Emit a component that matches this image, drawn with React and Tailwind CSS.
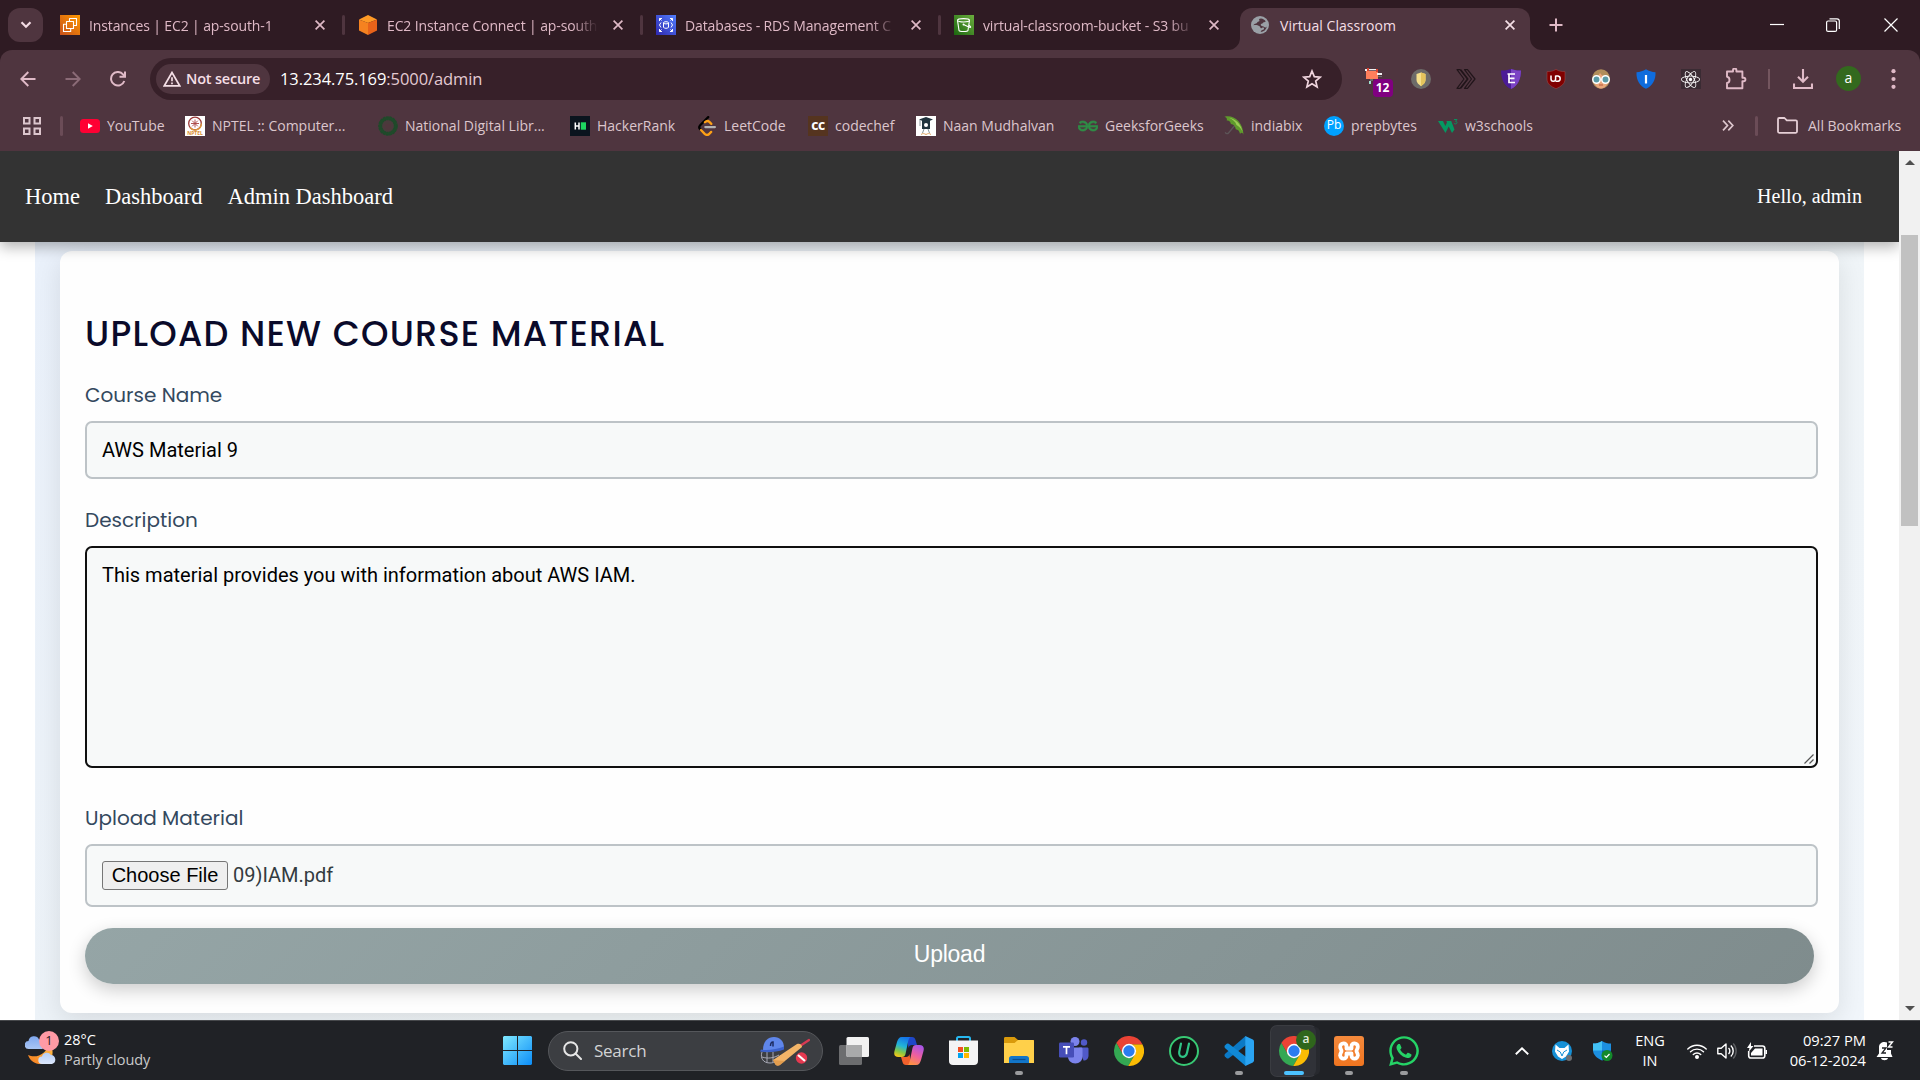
import React from "react";
import { FaReact, FaWhatsapp } from "react-icons/fa";
import { SiGeeksforgeeks } from "react-icons/si";

const Close = ({ className = "" }) => (
  <svg viewBox="0 0 10 10" className={"h-[10px] w-[10px] shrink-0 " + className} fill="none" stroke="currentColor" strokeWidth="1.7">
    <path d="M.6.6 9.4 9.4M9.4.6.6 9.4" />
  </svg>
);

const Ec2Icon = () => (
  <svg viewBox="0 0 20 20" className="h-5 w-5">
    <defs>
      <linearGradient id="ec2" x1="0" y1="1" x2="1" y2="0">
        <stop stopColor="#c8511b" />
        <stop offset="1" stopColor="#ff9900" />
      </linearGradient>
    </defs>
    <path fill="url(#ec2)" d="M0 0h20v20H0z" />
    <g fill="none" stroke="#fff" strokeWidth="1.1" strokeLinejoin="round">
      <path d="M6.5 6.5h7v7h-7zM9.5 6.3V3.5h7v7h-2.8M6.3 9.3H3.5v7.2h7.2v-2.8" />
    </g>
  </svg>
);

const CubeIcon = () => (
  <svg viewBox="0 0 20 20" className="h-5 w-5">
    <path fill="#ff9a26" d="M10 0 19 4.5 10 8 1 4.5z" />
    <path fill="#f58220" d="M1 4.5 10 8v12L1 15.5z" />
    <path fill="#e8631a" d="M19 4.5 10 8v12l9-4.5z" />
  </svg>
);

const RdsIcon = () => (
  <svg viewBox="0 0 20 20" className="h-5 w-5">
    <defs>
      <linearGradient id="rds" x1="0" y1="1" x2="1" y2="0">
        <stop stopColor="#2e27ad" />
        <stop offset="1" stopColor="#527fff" />
      </linearGradient>
    </defs>
    <path fill="url(#rds)" d="M0 0h20v20H0z" />
    <g fill="none" stroke="#fff" strokeWidth="1">
      <path d="M3.5 6V3.5H6M3.5 3.5 5.5 5.5M14 3.5h2.5V6M16.5 3.5l-2 2M3.5 14v2.5H6M3.5 16.5l2-2M16.5 14v2.500H14M16.5 16.5l-2-2" />
      <path d="M5 7.500 3.500 10 5 12.500M15 7.500l1.500 2.500-1.500 2.500" />
      <ellipse cx="10" cy="7.800" rx="2.500" ry="1.100" />
      <path d="M7.500 7.800v4.400c0 1.500 5 1.500 5 0V7.800" />
    </g>
  </svg>
);

const S3Icon = () => (
  <svg viewBox="0 0 20 20" className="h-5 w-5">
    <defs>
      <linearGradient id="s3" x1="0" y1="1" x2="1" y2="0">
        <stop stopColor="#1b660f" />
        <stop offset="1" stopColor="#6cae3e" />
      </linearGradient>
    </defs>
    <path fill="url(#s3)" d="M0 0h20v20H0z" />
    <g fill="none" stroke="#fff" strokeWidth="1.1">
      <ellipse cx="9.500" cy="5.300" rx="6" ry="1.700" />
      <path d="m3.500 5.300 1.500 10c.3 1.600 8.700 1.600 9 0l1.500-10M9.500 9.500l5.300 2.600c1.700.8 2.300.2 1.500-.7L14.800 10" />
    </g>
    <circle cx="9.500" cy="9.500" r="1" fill="#fff" />
  </svg>
);

const GlobeIcon = () => (
  <svg viewBox="0 0 18 18" className="h-[18px] w-[18px]">
    <circle cx="9" cy="9" r="9" fill="#9aa0a6" />
    <path fill="#4f353f" d="M10 2.500c-2 0-2.200 1-1.700 1.800.5 1-.3 1.400-1.300 1.500-.8.100-.6 1.500-1.800 1.600-1.600.1-2.600 1-2.700 1.800 2.500-.4 4.600.2 6 1 1 .6.500 1.700 1.500 2 1.100.3 1.300-.7 2-.6.700 0 1.200.5 1 1.400-.200.900-1.500 1-2.300 1.300-.6.300-.8.800-1 1.700 3-.1 5.600-2.300 6-5.500-.6 1-2 1.200-2.500.4-.6-.9-2.300-.3-3.200-1.500-.8-1.200.4-2 1.300-2 .7 0 .7-1.100 1.500-1.100.9 0 .8-.8 2-.8C13.700 3.800 12 2.600 10 2.500Z" />
  </svg>
);

const tabs = [
  { title: "Instances | EC2 | ap-south-1", Icon: Ec2Icon },
  { title: "EC2 Instance Connect | ap-south", Icon: CubeIcon },
  { title: "Databases - RDS Management C", Icon: RdsIcon },
  { title: "virtual-classroom-bucket - S3 bu", Icon: S3Icon },
];

function TabStrip() {
  return (
    <div className="flex h-[50px] bg-[#2f1b23] text-[#dfb9c6]">
      <div className="flex w-[47px] shrink-0 items-center pl-2">
        <div className="flex h-[34px] w-[35px] items-center justify-center rounded-xl bg-[#4f353f]">
          <svg viewBox="0 0 12 8" className="h-2 w-3" fill="none" stroke="#f3dbe3" strokeWidth="2.200">
            <path d="m1.500 1.200 4.500 4.500 4.500-4.500" />
          </svg>
        </div>
      </div>
      {tabs.map(({ title, Icon }, i) => (
        <div key={title} className="flex w-[298px] shrink-0 items-center pl-[13px]">
          <Icon />
          <div className="ml-[9px] w-[211px] overflow-hidden whitespace-nowrap text-[14px] tracking-[-0.120px] [mask-image:linear-gradient(90deg,#000_88%,transparent)]">
            {title}
          </div>
          <Close className="ml-[15px]" />
          {i < 3 && <div className="ml-auto h-5 w-[3px] rounded bg-[#4f353f]" />}
        </div>
      ))}
      <div className="relative mt-[8px] ml-[1px] flex h-[42px] w-[290px] shrink-0 items-center rounded-t-xl bg-[#4f353f] pb-2 pl-[11px]">
        <svg viewBox="0 0 12 12" className="absolute bottom-0 -left-3 h-3 w-3">
          <path fill="#4f353f" d="M12 0v12H0A12 12 0 0 0 12 0Z" />
        </svg>
        <svg viewBox="0 0 12 12" className="absolute -right-3 bottom-0 h-3 w-3">
          <path fill="#4f353f" d="M0 0v12h12A12 12 0 0 1 0 0Z" />
        </svg>
        <GlobeIcon />
        <div className="ml-[11px] w-[225px] text-[14px] tracking-[0.050px] text-[#f5dfe6]">Virtual Classroom</div>
        <Close className="text-[#f5dfe6]" />
      </div>
      <div className="flex flex-1 items-center">
        <svg viewBox="0 0 14 14" className="ml-[19px] h-[14px] w-[14px]" stroke="currentColor" strokeWidth="2">
          <path d="M7 .5v13M.5 7h13" />
        </svg>
        <svg viewBox="0 0 14 14" className="ml-[207px] h-[14px] w-[14px]" stroke="#fff" strokeWidth="1.200">
          <path d="M0 6.500h14" />
        </svg>
        <svg viewBox="0 0 14 14" className="ml-[42px] h-[14px] w-[14px]" fill="none" stroke="#fff" strokeWidth="1.200">
          <rect x=".6" y="3" width="10" height="10.400" rx="1.500" />
          <path d="M3.500.8h7.500c1.500 0 2.300.8 2.300 2.300v7.900" />
        </svg>
        <svg viewBox="0 0 14 14" className="ml-[44px] h-[14px] w-[14px]" stroke="#fff" strokeWidth="1.200">
          <path d="m.5.5 13 13M13.500.5l-13 13" />
        </svg>
      </div>
    </div>
  );
}

const Slot = ({ children }) => <div className="flex w-[45px] shrink-0 items-center justify-center">{children}</div>;

function Toolbar() {
  return (
    <div className="flex h-[58px] items-center text-[#e0bac7]">
      <svg viewBox="0 0 16 16" className="ml-[20px] h-4 w-4" fill="none" stroke="currentColor" strokeWidth="1.900">
        <path d="M15.500 8H1.500M8.300 1 1.300 8l7 7" />
      </svg>
      <svg viewBox="0 0 16 16" className="ml-[29px] h-4 w-4" fill="none" stroke="#8b6b77" strokeWidth="1.900">
        <path d="M.5 8h14M7.700 1l7 7-7 7" />
      </svg>
      <svg viewBox="0 0 16 16" className="ml-[29px] h-4 w-4" fill="none" stroke="currentColor" strokeWidth="2">
        <path d="M14.300 10A6.800 6.800 0 1 1 13 3.300L15 5.500M15 .5v5.300H9.500" />
      </svg>
      <div className="ml-[24px] flex h-[42px] w-[1192px] items-center rounded-full bg-[#372029] pr-[20px] pl-[6px]">
        <div className="flex h-[30px] w-[114px] items-center rounded-full bg-[#4f353f] pl-[7px] text-[#f5dfe6]">
          <svg viewBox="0 0 18 16" className="h-4 w-[18px]" fill="none" stroke="currentColor" strokeWidth="1.700">
            <path d="M9 1.500 1.300 14.800h15.400zM9 6.300v4M9 11.600v1.700" />
          </svg>
          <span className="ml-[5px] text-[14.500px] font-semibold tracking-[-0.200px]">Not secure</span>
        </div>
        <div className="ml-[10px] text-[16.500px] tracking-[-0.080px] text-[#e3cad2]">
          <span className="text-white">13.234.75.169</span>:5000/admin
        </div>
        <svg viewBox="0 0 20 20" className="ml-auto h-5 w-5" fill="none" stroke="#f0d5de" strokeWidth="1.700">
          <path d="m10 2 2.300 5.600 6 .5-4.600 3.900 1.400 5.900L10 14.700l-5.100 3.200L6.300 12 1.700 8.100l6-.5z" />
        </svg>
      </div>
      <div className="ml-[11px] flex items-center">
        <Slot>
          <div className="relative h-[34px] w-[20px]">
            <svg viewBox="0 0 20 22" className="absolute top-[6px] left-[-1px] h-[22px] w-[20px]">
              <path fill="#ff7f5c" d="M1 3h12v8H1z" />
              <path fill="#f2f2f2" d="M0 1h2v2H0zM3 1h9v1.200H3zM12 5h5v2h-5z" />
              <path fill="#d8412f" d="M2 0h2v3H2zM11 1h2v3h-2z" />
              <path fill="#6b6b6b" d="M5 11h3v2H5zM13 8h4v1h-4z" />
              <path fill="#9fe0cf" d="M4 13h2v3H4z" />
            </svg>
            <div className="absolute top-[17px] left-[7px] flex h-[18px] w-[20px] items-center justify-center rounded-[4px] bg-[#800080] text-[12px] font-bold text-white">
              12
            </div>
          </div>
        </Slot>
        <Slot>
          <svg viewBox="0 0 20 20" className="h-5 w-5">
            <circle cx="10" cy="10" r="10" fill="#6d6b69" />
            <path fill="#f7e08b" d="M10 3.500 14.500 5v6c0 2.500-2 4.500-4.500 6.200C7.500 15.500 5.500 13.500 5.500 11V5z" />
            <path fill="#e4c45c" d="M10 3.500 14.500 5v6c0 2.500-2 4.500-4.500 6.200z" />
          </svg>
        </Slot>
        <Slot>
          <svg viewBox="0 0 20 20" className="h-5 w-5" fill="#4f353f" stroke="#21151a" strokeWidth="1.200" strokeLinejoin="round">
            <path d="M1 .7h3L11.500 10 4 19.300H1L8 10zM8.500.7h3L19 10l-7.500 9.300h-3l7-9.300z" />
            <path d="M4.800.7 12 10l-7.200 9.300" fill="none" />
          </svg>
        </Slot>
        <Slot>
          <svg viewBox="0 0 20 20" className="h-5 w-5">
            <path fill="#4b1c96" d="M0 1.500C4 1.800 7 1 10 0c3 1 6 1.800 10 1.500C20 10 17 17 10 20 3 17 0 10 0 1.500Z" />
            <path fill="#7b43c4" d="M10 0c3 1 6 1.800 10 1.500C20 10 17 17 10 20Z" />
            <path d="M6.500 5h7.500M7.500 9.300h6M14 13.500H8V5" fill="none" stroke="#fff" strokeWidth="1.700" />
          </svg>
        </Slot>
        <Slot>
          <svg viewBox="0 0 20 20" className="h-5 w-5">
            <path fill="#800000" stroke="#a05050" strokeWidth=".5" d="M10 .3c3 2 5 2.200 9 2.300V10c0 5-4 7.500-9 9.700C5 17.500 1 15 1 10V2.600c4-.1 6-.3 9-2.300Z" />
            <path d="M5 6.500V10a2.300 2.300 0 0 0 4.600 0V6.500M9.600 12.300H12a2.700 2.700 0 0 0 0-5.300H9.600" fill="none" stroke="#fff" strokeWidth="1.500" />
          </svg>
        </Slot>
        <Slot>
          <svg viewBox="0 0 20 20" className="h-5 w-5">
            <ellipse cx="10" cy="10" rx="9" ry="9.800" fill="#b08d5b" />
            <path fill="#e9a67b" d="M3 9c3-.5 5-3 6-5 2 3 5 4 8 5v4c-1 4-4 6.500-7 6.500S4 17 3 13z" />
            <circle cx="5.500" cy="10.500" r="3.700" fill="#5a9aa5" stroke="#fff" strokeWidth="1.500" />
            <circle cx="14.500" cy="10.500" r="3.700" fill="#5a9aa5" stroke="#fff" strokeWidth="1.500" />
            <path d="M8 16h4" stroke="#b5583c" />
          </svg>
        </Slot>
        <Slot>
          <svg viewBox="0 0 20 20" className="h-5 w-5">
            <path fill="#0f6cdd" d="M10 .2C13 2 16 3 19.500 3.200 20 11 16 17 10 19.800 4 17 0 11 .5 3.200 4 3 7 2 10 .2Z" />
            <path d="M10 6v8.500" stroke="#fff" strokeWidth="2.200" />
          </svg>
        </Slot>
        <Slot>
          <div className="flex h-5 w-5 items-center justify-center bg-[#3a2b33]">
            <FaReact className="h-[19px] w-[19px] text-white" />
          </div>
        </Slot>
        <Slot>
          <svg viewBox="0 0 22 22" className="h-[22px] w-[22px]" fill="none" stroke="currentColor" strokeWidth="1.900" strokeLinejoin="round">
            <path d="M2 3.500h6V2.200a1.700 1.700 0 0 1 3.400 0v1.300h6v6.300h1.300a1.700 1.700 0 0 1 0 3.400h-1.300v7H2v-5.200c1.500-.3 2.500-1.500 2.500-3.100S3.500 9 2 8.700z" />
          </svg>
        </Slot>
      </div>
      <div className="ml-[10px] h-5 w-[2px] bg-[#74565f]" />
      <svg viewBox="0 0 20 20" className="ml-[23px] h-5 w-5" fill="none" stroke="currentColor" strokeWidth="2.100">
        <path d="M10 0v12.500M5 7.800l5 5 5-5M1 14.500V19h18v-4.500" />
      </svg>
      <div className="mb-[2px] ml-[23px] flex h-[25px] w-[25px] items-center justify-center rounded-full bg-[#33691e] pb-[2px] text-[14px] text-white">a</div>
      <svg viewBox="0 0 4 18" className="ml-[30px] h-[20px] w-[5px]" fill="currentColor">
        <circle cx="2" cy="2" r="1.900" />
        <circle cx="2" cy="9" r="1.900" />
        <circle cx="2" cy="16" r="1.900" />
      </svg>
    </div>
  );
}

const YoutubeMark = () => (
  <svg viewBox="0 0 20 20" className="h-5 w-5">
    <rect y="3" width="20" height="14" rx="3.500" fill="#ff0033" />
    <path fill="#fff" d="M8 7.200v5.600l4.800-2.800z" />
  </svg>
);
const NptelMark = () => (
  <svg viewBox="0 0 20 20" className="h-5 w-5">
    <path fill="#fff" d="M0 0h20v20H0z" />
    <circle cx="10" cy="7.500" r="6.300" fill="none" stroke="#9b3a3a" strokeWidth="1.300" />
    <path d="M16.300 7.500A6.300 6.300 0 0 1 5 11.500" fill="none" stroke="#e09a3c" strokeWidth="1.300" />
    <path d="M10 3.500v8M6 7.500h8M7.200 4.700l5.600 5.600M12.800 4.700l-5.600 5.600" stroke="#a94442" strokeWidth=".9" />
    <text x="10" y="19" fontSize="5" fontWeight="700" textAnchor="middle" fill="#d98b2b">NPTEL</text>
  </svg>
);
const NdlMark = () => (
  <svg viewBox="0 0 20 20" className="h-5 w-5">
    <circle cx="10" cy="10" r="7.800" fill="#4a3a3c" stroke="#1f4a2a" strokeWidth="4" strokeDasharray="2.400 .5" />
    <circle cx="10" cy="10" r="7.800" fill="none" stroke="#1f4a2a" strokeWidth="2.600" />
    <path d="M7 9h6M7 11h6M8 13h4" stroke="#55323c" strokeWidth="1" />
  </svg>
);
const HackerMark = () => (
  <svg viewBox="0 0 20 20" className="h-5 w-5">
    <path fill="#0b141e" d="M0 0h20v20H0z" />
    <path d="M5.300 6.500v7M9 6.500v7M5.300 10H9" stroke="#fff" strokeWidth="1.500" />
    <path fill="#1ed760" d="M10.800 6.300h5.200v7.400h-5.200z" />
  </svg>
);
const LeetMark = () => (
  <svg viewBox="0 0 24 24" className="h-5 w-5" fill="none" strokeWidth="2.700" strokeLinecap="round">
    <path d="M13.500 1.300 3.800 11c-1.500 1.600-1.500 3.200 0 4.800l1 1" stroke="#000" />
    <path d="m4.800 16.800 4.400 4.600c1.600 1.500 4 1.500 5.500 0l2.300-2.300M9.500 7.500c2-2 3.700-2 5.400-.4l2.300 2.300" stroke="#ffa116" />
    <path d="M10 13.300h11.500" stroke="#b3b3b3" />
  </svg>
);
const ChefMark = () => (
  <div className="flex h-5 w-5 items-center justify-center bg-[#55341f] pb-[2px] text-[14px] font-bold tracking-[-0.500px] text-white">cc</div>
);
const NaanMark = () => (
  <svg viewBox="0 0 20 20" className="h-5 w-5">
    <path fill="#fff" d="M0 0h20v20H0z" />
    <path fill="#20333d" d="M3 3.500 10 1l7 2.500-3 1.200V7H6V4.700zM6 7h8v6H6z" />
    <circle cx="10" cy="9" r="2" fill="#fff" />
    <path d="M4 4v6M8 13l-1.500 4M12 13l1.500 4" stroke="#7a8a90" strokeWidth=".9" />
    <path d="M5 18.500c2-1.500 3-1 5 0 2-1 3-1.500 5 0" fill="none" stroke="#e0a25c" />
  </svg>
);
const GfgMark = () => <SiGeeksforgeeks className="h-5 w-5 text-[#2f8d46]" stroke="#2f8d46" strokeWidth="0.7" />;
const UmbrellaMark = () => (
  <svg viewBox="0 0 20 20" className="h-5 w-5">
    <path d="m12 8-7.500 9c-1 1.200-2.700.7-3.200-.8" fill="none" stroke="#5d5558" strokeWidth="1.300" />
    <path fill="#5f9a2c" d="M.5.800C9-1.500 19 5 19.500 19c-.7-2.500-2.300-2.800-3.500-1-.5-3-1.900-4.600-4.200-4.800-.4-3-2.200-5-4.900-5.200C6.500 5.500 5 4.300 2.700 4.600 3.300 2.900 2.500 1.300.5.800Z" />
    <path fill="#9ccb55" d="M5 1.800C11 2.500 17 8 18.500 15.500c-2-4-4-5.500-6-6.500-1-3.500-4-5.500-7.500-7.200Z" />
  </svg>
);
const PrepMark = () => (
  <div className="flex h-5 w-5 items-center justify-center rounded-full bg-[#00a1ff] pb-px text-[12px] font-medium text-white">Pb</div>
);
const W3Mark = () => (
  <svg viewBox="0 0 20 20" className="h-5 w-5">
    <path fill="#059862" d="M0 5h5l2.300 5L9 6.500 8.400 5h4.800L16.500 13.500 14 17 10.700 10.500 7.500 17z" />
    <path d="M16 3.500h3l-1.500 1.800c2 0 2 2.600 0 2.600-.8 0-1.300-.3-1.600-.8" fill="none" stroke="#059862" strokeWidth=".9" />
  </svg>
);

const bookmarks = [
  ["YouTube", YoutubeMark, "w-[105px]"],
  ["NPTEL :: Computer...", NptelMark, "w-[193px]"],
  ["National Digital Libr...", NdlMark, "w-[192px]"],
  ["HackerRank", HackerMark, "w-[127px]"],
  ["LeetCode", LeetMark, "w-[111px]"],
  ["codechef", ChefMark, "w-[108px]"],
  ["Naan Mudhalvan", NaanMark, "w-[162px]"],
  ["GeeksforGeeks", GfgMark, "w-[146px]"],
  ["indiabix", UmbrellaMark, "w-[100px]"],
  ["prepbytes", PrepMark, "w-[114px]"],
  ["w3schools", W3Mark, "w-[120px]"],
];

function BookmarksBar() {
  return (
    <div className="flex h-[43px] items-center pb-[8px] text-[14px] whitespace-nowrap text-[#dcc6cd]">
      <svg viewBox="0 0 18 18" className="ml-[23px] h-[18px] w-[18px]" fill="none" stroke="currentColor" strokeWidth="2">
        <path d="M1 1h5.500v5.500H1zM11.500 1H17v5.500h-5.500zM1 11.500h5.500V17H1zM11.500 11.500H17V17h-5.500z" />
      </svg>
      <div className="mr-[17px] ml-[19px] h-5 w-[3px] rounded bg-[#6b4c57]" />
      {bookmarks.map(([label, Mark, width]) => (
        <div key={label} className={"flex shrink-0 items-center gap-[7px] " + width}>
          <Mark />
          <span className="pb-px">{label}</span>
        </div>
      ))}
      <svg viewBox="0 0 12 11" className="ml-[164px] h-[11px] w-[12px]" fill="none" stroke="currentColor" strokeWidth="1.700">
        <path d="m1 .7 4.500 4.800L1 10.300M6.300.7l4.500 4.800-4.500 4.800" />
      </svg>
      <div className="ml-[21px] h-5 w-[3px] rounded bg-[#6b4c57]" />
      <svg viewBox="0 0 21 17" className="ml-[19px] h-[17px] w-[21px]" fill="none" stroke="#e6cfd6" strokeWidth="1.800" strokeLinejoin="round">
        <path d="M1 2.200C1 1.500 1.500 1 2.200 1h5.300l2.300 2.400h9c.7 0 1.200.5 1.200 1.200v10c0 .7-.5 1.200-1.200 1.200H2.200c-.7 0-1.200-.5-1.200-1.200z" />
      </svg>
      <span className="ml-[10px] pb-px">All Bookmarks</span>
    </div>
  );
}

const Label = ({ children }) => (
  <div className="h-[39px] text-[20px] leading-[26px] whitespace-nowrap text-[#34495e] font-['Poppins','Inter',sans-serif]">{children}</div>
);

function Page() {
  return (
    <div className="flex h-[869px] bg-white">
      <div className="flex min-w-0 flex-1 flex-col overflow-hidden">
        <nav className="relative z-10 flex h-[91px] shrink-0 items-center gap-[25px] bg-[#333] pr-[37px] pl-[25px] font-['Liberation_Serif',serif] text-[22.500px] text-white shadow-[0_5px_13px_rgba(0,0,0,0.3)]">
          <span>Home</span>
          <span>Dashboard</span>
          <span>Admin Dashboard</span>
          <span className="ml-auto pb-px text-[20px] tracking-[0.040px]">Hello, admin</span>
        </nav>
        <div className="mr-[35px] ml-[35px] h-[778px] bg-[linear-gradient(135deg,#eaf1fb_0%,#eff4f6_50%,#f1f6fb_100%)] px-[25px] pt-[9px]">
          <div className="h-[762px] rounded-xl bg-[#fefefe] pt-[49px] pr-[21px] pl-[25px] shadow-[0_8px_28px_rgba(0,0,0,0.1)]">
            <h1 className="h-[82px] text-[35px] leading-[68px] font-medium tracking-[1.250px] whitespace-nowrap text-[#0a0a2a] font-['Poppins','Inter',sans-serif]">
              UPLOAD NEW COURSE MATERIAL
            </h1>
            <Label>Course Name</Label>
            <div className="flex h-[58px] items-center rounded-[7px] border-2 border-[#bdc3c7] bg-[#f7f9f9] px-[15px] font-['Roboto',sans-serif] text-[20px] text-black">
              AWS Material 9
            </div>
            <div className="h-[28px]" />
            <Label>Description</Label>
            <div className="flex h-[222px] rounded-[7px] border-2 border-[#101010] bg-[#f7f9f9] pt-[15px] pl-[15px] font-['Roboto',sans-serif] text-[20px] leading-[24px] text-black">
              <span>This material provides you with information about AWS IAM.</span>
              <svg viewBox="0 0 12 12" className="mr-[1px] mb-[1px] ml-auto h-3 w-3 self-end" stroke="#555" strokeWidth="1.200">
                <path d="M1.500 10.500 10.500 1.500M6.500 10.500l4-4" />
              </svg>
            </div>
            <div className="h-[37px]" />
            <Label>Upload Material</Label>
            <div className="flex h-[63px] items-center rounded-[7px] border-2 border-[#bdc3c7] bg-[#f7f9f9] px-[15px]">
              <div className="flex h-[29px] w-[126px] items-center justify-center rounded-[3px] border border-[#767676] bg-[#efefef] pb-[2px] font-['Liberation_Sans',sans-serif] text-[20px] text-black">
                Choose File
              </div>
              <span className="ml-[5px] pb-[2px] font-['Roboto',sans-serif] text-[20px] text-[#333b40]">09)IAM.pdf</span>
            </div>
            <div className="mt-[21px] mr-[4px] flex h-[56px] items-center justify-center rounded-full bg-[linear-gradient(135deg,#95a5a6,#7f8c8d)] pb-[3px] font-['Liberation_Sans',sans-serif] text-[23px] tracking-[-0.250px] text-white shadow-[0_6px_18px_rgba(0,0,0,0.2)]">
              Upload
            </div>
          </div>
        </div>
      </div>
      <div className="flex w-[21px] shrink-0 flex-col items-center bg-[#f1f1f1]">
        <svg viewBox="0 0 10 5" className="mt-[9px] h-[5px] w-[10px]" fill="#505050"><path d="M5 0 10 5H0z" /></svg>
        <div className="mt-[70px] h-[291px] w-[17px] bg-[#c1c1c1]" />
        <svg viewBox="0 0 10 5" className="mt-auto mb-[9px] h-[5px] w-[10px]" fill="#505050"><path d="M5 5 10 0H0z" /></svg>
      </div>
    </div>
  );
}

const ChromeMark = () => (
  <svg viewBox="2 2 44 44" className="h-[30px] w-[30px]">
    <path fill="#34a853" d="M15.340 29 5.540 12.030A22 22 0 0 0 22.860 45.970L32.660 29A10 10 0 0 1 15.340 29Z" />
    <path fill="#fbbc04" d="M32.660 29 22.860 45.970A22 22 0 0 0 43.600 14H24A10 10 0 0 1 32.660 29Z" />
    <path fill="#ea4335" d="M24 14H43.600A22 22 0 0 0 5.540 12.030L15.340 29A10 10 0 0 1 24 14Z" />
    <circle cx="24" cy="24" r="10.500" fill="#fff" />
    <circle cx="24" cy="24" r="8.300" fill="#2a7cf0" />
  </svg>
);

const TaskSlot = ({ children, running, active }) => (
  <div className={"relative flex h-[50px] w-[45px] shrink-0 items-center justify-center rounded-md " + (active ? "bg-[#303238] shadow-[5px_0_0_-1px_#27292e,0_0_0_1px_#3a3c41]" : "")}>
    {children}
    {running && <div className="absolute bottom-[1px] h-1 w-2 rounded-full bg-[#9a9b9d]" />}
    {active && <div className="absolute bottom-[1px] h-1 w-5 rounded-full bg-[#4cc2ff]" />}
  </div>
);

function Taskbar() {
  return (
    <div className="flex h-[60px] items-center border-t border-[#46484b] bg-[#202226] text-white">
      <div className="flex w-[503px] shrink-0 items-center pl-[25px]">
        <div className="relative mb-[3px] h-[38px] w-[34px]">
          <svg viewBox="0 0 34 38" className="h-[38px] w-[34px]">
            <defs>
              <linearGradient id="moon" x1="0" y1="1" x2="1" y2="0">
                <stop stopColor="#f57c1f" />
                <stop offset="1" stopColor="#ffc34a" />
              </linearGradient>
              <linearGradient id="cloud" x1="0" y1="0" x2="0" y2="1">
                <stop stopColor="#7fa8ee" />
                <stop offset="1" stopColor="#dbe7fb" />
              </linearGradient>
            </defs>
            <path fill="url(#moon)" d="M3 25c8 4 20-1 20-12 6 5 6 13 1 18-7 6-18 3-21-6Z" />
            <path fill="url(#cloud)" d="M4 19a4 4 0 0 1-.5-8 5.500 5.500 0 0 1 10.500-1.500 4.800 4.800 0 0 1 3 9.500zM17 34a3.700 3.700 0 0 1 0-7.400 5 5 0 0 1 9-1.600 4.600 4.600 0 0 1 1 9z" />
          </svg>
          <div className="absolute top-[1px] left-[14px] flex h-5 w-5 items-center justify-center rounded-full bg-[#ff9aa5] text-[13px] text-[#2b1b1d]">1</div>
        </div>
        <div className="ml-[5px] pb-[2px] text-[14.500px] leading-[20px]">
          <div>28°C</div>
          <div className="text-[14.500px] tracking-[-0.050px] text-[#c9cacb]">Partly cloudy</div>
        </div>
      </div>
      <svg viewBox="0 0 29 29" className="h-[29px] w-[29px] shrink-0">
        <defs>
          <linearGradient id="win" x1="0" y1="0" x2="1" y2="1">
            <stop stopColor="#7fe9ff" />
            <stop offset="1" stopColor="#0c8df7" />
          </linearGradient>
        </defs>
        <path fill="url(#win)" d="M1 0h13v14H0V1zM15 0h13l1 1v13H15zM0 15h14v14H1l-1-1zM15 15h14v13l-1 1H15z" />
      </svg>
      <div className="ml-[16px] flex h-[40px] w-[275px] shrink-0 items-center rounded-full border border-[#55575b] bg-[#3c3e42] pr-[12px] pl-[14px]">
        <svg viewBox="0 0 19 19" className="h-[19px] w-[19px]" fill="none" stroke="#e6e6e6" strokeWidth="2">
          <circle cx="7.800" cy="7.800" r="6.600" />
          <path d="m12.500 12.500 5.500 5.500" strokeLinecap="round" />
        </svg>
        <span className="ml-[12px] text-[17px] tracking-[-0.250px] text-[#d2d3d4]">Search</span>
        <svg viewBox="0 0 50 30" className="ml-auto h-[30px] w-[50px]">
          <path d="M2 16c-2 6 1 11 8 11 5 0 9-3 11-8M2 21c6 2 12 1 17-2M7 16v11M13 16v10" fill="none" stroke="#a7a8b5" strokeWidth="1" />
          <path fill="#5f86ea" d="M3 14C3 5 8 1 14 1c6 0 10 4 10 11-5 3-14 4-21 2Z" />
          <path fill="#3c62cc" d="M1 13.500c6 1 16 0 23-3v3C17 16 7 17 0 15.500z" />
          <path d="M10.500 10c0-3 1.500-4 2.500-4v4.500" fill="none" stroke="#1d2b62" strokeWidth="1.500" />
          <path d="m40 10 9-6" stroke="#d83a53" strokeWidth="2.200" strokeLinecap="round" />
          <path fill="#f3b568" d="m13 24 24-16c3-1 5 1 5 3L20 29c-2 1-4 1-5-1z" />
          <path fill="#d98d3d" d="m13 24 3 5c1 1 3 1 4 0l5-4z" opacity=".6" />
          <circle cx="41.500" cy="22" r="5.700" fill="#e63950" />
          <path d="m38 19 7 6" stroke="#fff" strokeWidth="2.200" />
        </svg>
      </div>
      <div className="ml-[8px] flex shrink-0 items-center gap-[10px]">
        <TaskSlot>
          <svg viewBox="0 0 30 28" className="h-[28px] w-[30px]">
            <rect y="8" width="23" height="20" rx="1.500" fill="#6c6d6f" />
            <rect x="7.500" width="22.500" height="20" rx="1.500" fill="#f2f2f2" />
            <path fill="#a9aaab" d="M7.500 8H23v12H9a1.500 1.500 0 0 1-1.500-1.500z" />
          </svg>
        </TaskSlot>
        <TaskSlot>
          <svg viewBox="0 0 30 28" className="h-[28px] w-[30px]">
            <defs>
              <linearGradient id="cpA" x1=".6" y1="0" x2=".3" y2="1">
                <stop stopColor="#1473ea" />
                <stop offset=".45" stopColor="#22b5d8" />
                <stop offset=".75" stopColor="#86c843" />
                <stop offset="1" stopColor="#f4c61a" />
              </linearGradient>
              <linearGradient id="cpB" x1=".7" y1="0" x2=".3" y2="1">
                <stop stopColor="#a855e8" />
                <stop offset=".5" stopColor="#ee5fa0" />
                <stop offset="1" stopColor="#ff9340" />
              </linearGradient>
            </defs>
            <path fill="#1f47c8" d="M13 0h5c2 0 3 1 3.500 3L23 8h-5c-2 0-3 1-3.500 3z" />
            <path fill="#f1612c" d="M17 28h-5c-2 0-3-1-3.500-3L7 20h5c2 0 3-1 3.500-3z" />
            <path fill="url(#cpA)" d="M17 0H8C5 0 4 2 3 5L.5 14c-1 4 .5 6 4 6H8c2 0 3-1 3.500-3L14 5c.6-3 1.500-5 3-5Z" />
            <path fill="url(#cpB)" d="M13 28h9c3 0 4-2 5-5l2.500-9c1-4-.5-6-4-6H22c-2 0-3 1-3.500 3L16 23c-.6 3-1.500 5-3 5Z" />
          </svg>
        </TaskSlot>
        <TaskSlot>
          <svg viewBox="0 0 29 29" className="h-[29px] w-[29px]">
            <path d="M8 5V2.500C8 1.500 8.500 1 9.500 1h10c1 0 1.500.5 1.500 1.500V5" fill="none" stroke="#27b8f0" strokeWidth="2" />
            <path fill="#f4f4f4" d="M0 4.500h29V25c0 2.500-1.500 4-4 4H4c-2.500 0-4-1.500-4-4z" />
            <path fill="#f25022" d="M9 11h5v5H9z" />
            <path fill="#7fba00" d="M15 11h5v5h-5z" />
            <path fill="#00a4ef" d="M9 17h5v5H9z" />
            <path fill="#ffb900" d="M15 17h5v5h-5z" />
          </svg>
        </TaskSlot>
        <TaskSlot running>
          <svg viewBox="0 0 30 27" className="h-[27px] w-[30px]">
            <path fill="#d99a0b" d="M0 1.500C0 .5.500 0 1.500 0h9L14 3h16v8H0z" />
            <path fill="#ffd04a" d="M0 6h10.500L14 3h14.500c1 0 1.500.5 1.500 1.500V26H0z" />
            <path fill="#1276c9" d="M5 21.500C5 20 6 19 7.500 19h15c1.500 0 2.500 1 2.500 2.500V26H5z" />
            <path d="M8.500 22.500h13" stroke="#0a4e8f" strokeWidth="1.200" />
          </svg>
        </TaskSlot>
        <TaskSlot>
          <svg viewBox="0 0 30 27" className="h-[27px] w-[30px]">
            <circle cx="25" cy="5.500" r="3.200" fill="#5059c9" />
            <path fill="#5059c9" d="M20 10.500h8c1 0 1.500.5 1.500 1.500v6.500c0 3-2 5-5 5z" />
            <circle cx="16" cy="4.500" r="4.500" fill="#7b83eb" />
            <path fill="#7b83eb" d="M9 10.500h13c1 0 1.500.5 1.500 1.500v7.500c0 4-3 7-7.200 7S9 23.500 9 19.500z" />
            <rect y="5.500" width="15" height="15" rx="1.300" fill="#464eb8" />
            <path d="M4 9.800h7M7.500 9.800v7.500" stroke="#fff" strokeWidth="1.700" />
          </svg>
        </TaskSlot>
        <TaskSlot>
          <ChromeMark />
        </TaskSlot>
        <TaskSlot>
          <div className="flex h-[30px] w-[30px] items-center justify-center rounded-full border-2 border-[#38c974] bg-[#121314]">
            <svg viewBox="0 0 14 17" className="h-[17px] w-[14px]" fill="none" stroke="#2fc486" strokeWidth="2.200" strokeLinecap="round">
              <path d="M4 1.500 2.200 10c-.8 6.500 6.800 6.500 8 0L12 1.500" />
            </svg>
          </div>
        </TaskSlot>
        <TaskSlot running>
          <svg viewBox="0 0 100 100" className="h-[30px] w-[30px]">
            <path fill="#0b79c5" d="M72 0 3 60q-3 4 0 8l6 6q3 2 7 0L76 28z" />
            <path fill="#1089d6" d="M72 100 3 40q-3-4 0-8l6-6q3-2 7 0L76 72z" />
            <path fill="#2aa4f2" d="m71 0 25 12q4 2 4 6v64q0 4-4 6L71 100z" />
          </svg>
        </TaskSlot>
        <TaskSlot active>
          <ChromeMark />
          <div className="absolute top-[4px] left-[25px] flex h-5 w-5 items-center justify-center rounded-full bg-[#2f661c] pb-[2px] text-[12px] font-semibold text-[#e3ecdf]">a</div>
        </TaskSlot>
        <TaskSlot running>
          <div className="flex h-[30px] w-[30px] items-center justify-center rounded-[3px] bg-[linear-gradient(#f58a3c,#f07520)]">
            <svg viewBox="0 0 24 20" className="h-[20px] w-[24px]" fill="none" stroke="#fff" strokeWidth="3.800" strokeLinejoin="round">
              <path d="M9.500 7.500V5.300a3 3 0 0 0-3-3 3.300 3.300 0 0 0-3.300 3.500C3.200 8 4.500 8.500 4.500 10s-1.300 2-1.300 4.200a3.300 3.300 0 0 0 3.300 3.500 3 3 0 0 0 3-3v-2.200h5v2.200a3 3 0 0 0 3 3 3.300 3.300 0 0 0 3.300-3.500c0-2.200-1.300-2.700-1.300-4.200s1.300-2 1.300-4.200a3.300 3.300 0 0 0-3.300-3.500 3 3 0 0 0-3 3v2.200z" />
            </svg>
          </div>
        </TaskSlot>
        <TaskSlot running>
          <FaWhatsapp className="h-[34px] w-[34px] text-[#25d366]" />
        </TaskSlot>
      </div>
      <div className="ml-auto flex shrink-0 items-center text-[14.500px] leading-[20px]">
        <svg viewBox="0 0 14 8" className="h-2 w-[14px]" fill="none" stroke="#fff" strokeWidth="1.900">
          <path d="m.8 7.300 6.200-6 6.200 6" />
        </svg>
        <svg viewBox="0 0 20 20" className="ml-[23px] h-5 w-5">
          <circle cx="10" cy="10" r="10" fill="#1590d6" />
          <path fill="#fff" d="M3.500 3.500 7.500 7h5l4-3.500.5 7-3 5-4 2.500-4-2.500-3-5z" />
          <path d="m5 9 3.300 2L10 15l1.700-4L15 9" fill="none" stroke="#1590d6" strokeWidth="1" />
          <circle cx="17" cy="17" r="3" fill="#6d6f72" />
        </svg>
        <svg viewBox="0 0 20 20" className="ml-[21px] h-5 w-5">
          <path fill="#1c8fe0" d="M9 0c3 2 5.500 2.500 9 2.500V9c0 5-4 8-9 10.500C4 17 0 14 0 9V2.500C3.500 2.500 6 2 9 0Z" />
          <path fill="#43c2f5" d="M9 0v9.500H0v-7C3.500 2.500 6 2 9 0Z" />
          <path fill="#0b5fb8" d="M9 9.500h9c0 5-4 7.500-9 10z" />
          <circle cx="14" cy="14.500" r="5.500" fill="#13892a" />
          <path d="m11.500 14.600 1.800 1.800 3.200-3.400" fill="none" stroke="#fff" strokeWidth="1.300" />
        </svg>
        <div className="ml-[17px] w-[40px] text-center">
          <div>ENG</div>
          <div>IN</div>
        </div>
        <svg viewBox="0 0 20 16" className="ml-[17px] h-4 w-5" fill="none" stroke="#fff" strokeWidth="1.400" strokeLinecap="round">
          <path d="M.8 6a13 13 0 0 1 18.400 0M3.500 8.800a9.200 9.200 0 0 1 13 0M6.300 11.500a5.300 5.300 0 0 1 7.400 0" />
          <circle cx="10" cy="14" r="1.300" fill="#fff" />
        </svg>
        <svg viewBox="0 0 20 18" className="ml-[10px] h-[18px] w-5" fill="none" stroke="#fff" strokeWidth="1.400" strokeLinejoin="round">
          <path d="M.8 6.200h3.400L9 2v14l-4.800-4.200H.8zM11.500 6a4 4 0 0 1 0 6M13.800 3.500a7.500 7.500 0 0 1 0 11" />
          <path d="M16.200 1.500a11 11 0 0 1 0 15" stroke="#5d5f62" />
        </svg>
        <svg viewBox="0 0 21 18" className="ml-[10px] h-[18px] w-[21px]">
          <path d="M7 4h8.500c1.500 0 2.300.8 2.300 2.300v7.400c0 1.500-.8 2.300-2.300 2.300H4c-1.500 0-2.300-.8-2.300-2.300V9" fill="none" stroke="#fff" strokeWidth="1.600" />
          <path fill="#fff" d="M8 6.500h7.500v7H4V11zM18.500 8h1.500v4h-1.500zM4 0 0 6h2.500L1.500 10 6.500 4H4z" />
        </svg>
        <div className="ml-[12px] w-[86px] pb-[2px] text-right text-[14.700px] tracking-[-0.030px] whitespace-nowrap">
          <div>09:27 PM</div>
          <div>06-12-2024</div>
        </div>
        <svg viewBox="0 0 18 20" className="mr-[26px] ml-[10px] h-5 w-[18px]">
          <path fill="#fff" d="M3 6c0-3 2.500-5 5.500-5 1 0 2 .2 2.500.5V9h4v3.500l1.500 3.500H.5L3 12.500zM5 17h7c-.5 3-6.500 3-7 0Z" />
          <path d="M12.500 1h4L12.500 6h4" fill="none" stroke="#fff" strokeWidth="1.400" />
          <path d="M6 7h4l-4 5h4" fill="none" stroke="#202226" strokeWidth="1.300" />
        </svg>
      </div>
    </div>
  );
}

export default function App() {
  return (
    <div className="flex h-[1080px] w-[1920px] flex-col overflow-hidden bg-[#2f1b23] font-['Open_Sans',sans-serif]">
      <TabStrip />
      <div className="h-[101px] shrink-0 rounded-t-xl bg-[#4f353f]">
        <Toolbar />
        <BookmarksBar />
      </div>
      <Page />
      <Taskbar />
    </div>
  );
}
